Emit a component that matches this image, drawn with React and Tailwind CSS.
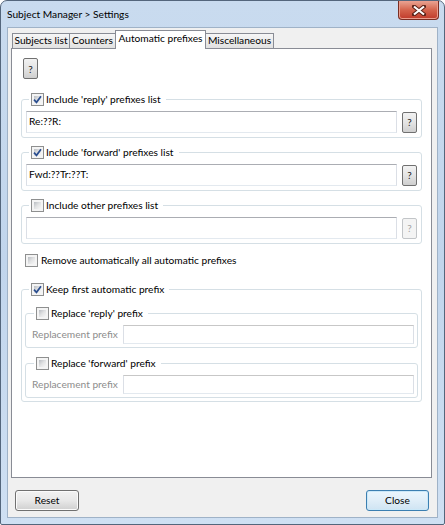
import React from "react";

function Check({ checked }) {
  return (
    <span className="w-[13px] h-[13px] shrink-0 border border-[#8e8f8f] bg-[#f4f4f4] p-[2px] flex">
      <span className="flex-1 flex items-center justify-center bg-gradient-to-br from-[#b9bdc2] via-[#e2e3e4] to-[#f7f7f7]">
        {checked && (
          <svg width="9" height="9" viewBox="0 0 9 9" className="-m-[1px]">
            <path d="M1 4.6 L3.5 7.3 L8 1.2" fill="none" stroke="#2a4d8f" strokeWidth="1.7" />
          </svg>
        )}
      </span>
    </span>
  );
}

function HelpButton({ disabled = false, className = "" }) {
  return (
    <button
      className={`w-[15px] h-[21px] shrink-0 rounded-[2px] border text-[10px] leading-none flex items-center justify-center ${
        disabled
          ? "border-[#c2c5c8] bg-[#f4f4f4] text-[#a3a3a3]"
          : "border-[#707070] bg-gradient-to-b from-[#f2f2f2] via-[#e4e4e4] to-[#cfcfcf] text-[#222]"
      } ${className}`}
    >
      ?
    </button>
  );
}

function TextBox({ value = "", className = "", muted = false }) {
  return (
    <div
      className={`bg-white border border-t-[#abadb3] border-x-[#dbdfe6] border-b-[#e3e9ef] pl-[2px] flex items-center ${
        muted ? "border-[#c7c7c7] border-t-[#c7c7c7]" : ""
      } ${className}`}
    >
      {value}
    </div>
  );
}

function Group({ label, checked, inner = false, className = "", children }) {
  return (
    <fieldset className={`border border-[#d5dfe5] rounded-[3px] ${className}`}>
      <legend className={`${inner ? "ml-[8px]" : "ml-[7px]"} gap-[2px] px-[2px] h-[15px] flex items-center`}>
        <Check checked={checked} />
        <span className="leading-[15px] pr-[3px] whitespace-nowrap">{label}</span>
      </legend>
      {children}
    </fieldset>
  );
}

function ListGroup({ label, checked, value, disabled, className }) {
  return (
    <Group label={label} checked={checked} className={className}>
      <div className="flex items-center gap-[5px] pt-[4px] pb-[4px] pl-[4px] pr-[4px]">
        <TextBox value={value} className="flex-1 h-[22px]" />
        <HelpButton disabled={disabled} />
      </div>
    </Group>
  );
}

function ReplaceGroup({ label, className }) {
  return (
    <Group label={label} inner className={className}>
      <div className="flex items-center pt-[4px] pb-[3px] pl-[6px] pr-[3px]">
        <span className="w-[91px] text-[#8d8d8d] whitespace-nowrap">Replacement prefix</span>
        <TextBox muted className="flex-1 h-[19px]" />
      </div>
    </Group>
  );
}

function Tab({ children, selected, className = "" }) {
  return (
    <div
      className={`flex items-center justify-center whitespace-nowrap border-t border-r border-[#898c95] ${
        selected
          ? "h-[19px] -mb-px bg-white border-l relative z-10 -ml-px pb-[2px]"
          : "h-[15px] bg-gradient-to-b from-[#f6f6f6] to-[#e1e1e1]"
      } ${className}`}
    >
      {children}
    </div>
  );
}

function DialogButton({ children, focused, className = "" }) {
  return (
    <button
      className={`h-[21px] rounded-[3px] border flex items-center justify-center ${
        focused
          ? "border-[#3c7fb1] bg-gradient-to-b from-[#eaf6fd] via-[#e0eef8] to-[#cfe4f3] shadow-[inset_0_0_0_1px_#cbe8f8]"
          : "border-[#707070] bg-gradient-to-b from-[#f2f2f2] via-[#e8e8e8] to-[#d0d0d0] shadow-[inset_0_0_0_1px_#fbfbfb]"
      } ${className}`}
    >
      {children}
    </button>
  );
}

export default function App() {
  return (
    <div className="w-[445px] h-[525px] font-['Lato',sans-serif] text-[10.2px] text-black bg-white">
      <div className="w-full h-full border border-[#54667c] rounded-t-[7px] rounded-b-[2px] bg-gradient-to-b from-[#c9dbef] via-[#c1d5ec] to-[#cfe0f3] px-[6px] pb-[6px] flex flex-col">
        {/* Title bar */}
        <div className="h-[26px] flex justify-between shrink-0">
          <span className="self-center pt-[1px] text-[10.2px] text-black">Subject Manager &gt; Settings</span>
          <button className="w-[41px] h-[19px] -mr-px rounded-b-[4px] border border-t-0 border-[#7a2d22] bg-gradient-to-b from-[#e8a493] via-[#d4634c] to-[#c0392a] flex items-center justify-center shadow-[inset_0_0_0_1px_#eb9d8d]">
            <svg width="14" height="11" viewBox="0 0 14 11">
              <path d="M2 1.5 L12 9.5 M12 1.5 L2 9.5" stroke="#5a2218" strokeWidth="4" strokeLinecap="square" />
              <path d="M2 1.5 L12 9.5 M12 1.5 L2 9.5" stroke="#ffffff" strokeWidth="2.2" />
            </svg>
          </button>
        </div>

        {/* Client area */}
        <div className="flex-1 bg-[#f0f0f0] border border-[#9fb2c7] flex flex-col">
          <div className="flex items-end pl-[4px] pt-[2px] h-[20px]">
            <Tab className="w-[58px] border-l">Subjects list</Tab>
            <Tab className="w-[46px]">Counters</Tab>
            <Tab selected className="w-[91px]">Automatic prefixes</Tab>
            <Tab className="w-[68px]">Miscellaneous</Tab>
          </div>

          <div className="ml-[3px] w-[421px] h-[430px] bg-white border border-[#898c95] px-[9px] pt-[9px] flex flex-col">
            <HelpButton className="ml-[2px]" />

            <ListGroup className="mt-[13px]" label="Include 'reply' prefixes list" checked value="Re:??R:" />
            <ListGroup className="mt-[7px]" label="Include 'forward' prefixes list" checked value="Fwd:??Tr:??T:" />
            <ListGroup className="mt-[7px]" label="Include other prefixes list" disabled />

            <div className="mt-[9px] h-[15px] ml-[4px] flex items-center gap-[3px]">
              <Check />
              <span>Remove automatically all automatic prefixes</span>
            </div>

            <Group className="mt-[14px]" label="Keep first automatic prefix" checked>
              <div className="pt-[9px] pb-[3px] px-[3px] flex flex-col">
                <ReplaceGroup label="Replace 'reply' prefix" />
                <ReplaceGroup className="mt-[8px]" label="Replace 'forward' prefix" />
              </div>
            </Group>
          </div>

          <div className="mt-[12px] flex justify-between pl-[7px] pr-[8px]">
            <DialogButton className="w-[64px]">Reset</DialogButton>
            <DialogButton focused className="w-[63px]">Close</DialogButton>
          </div>
        </div>
      </div>
    </div>
  );
}
